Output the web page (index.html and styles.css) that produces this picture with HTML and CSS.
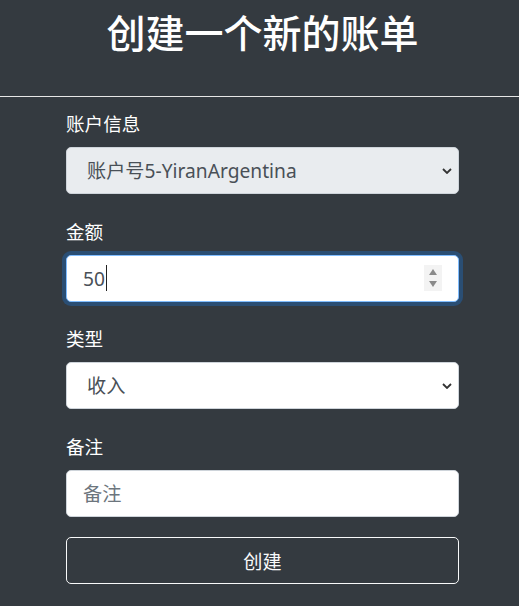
FILE: index.html
```html
<!DOCTYPE html>
<html lang="zh-CN">
<head>
<meta charset="utf-8">
<title>创建一个新的账单</title>
<link rel="stylesheet" href="styles.css">
</head>
<body>
<header class="page-header">
  <h1 class="title">创建一个新的账单</h1>
</header>
<hr class="divider">
<form class="bill-form">
  <div class="form-group">
    <label class="form-label">账户信息</label>
    <select class="form-control select" disabled>
      <option>账户号5-YiranArgentina</option>
    </select>
  </div>
  <div class="form-group">
    <label class="form-label">金额</label>
    <div class="form-control focused">
      <span class="value">50</span><span class="caret"></span>
      <span class="spinner">
        <svg width="18" height="26" viewBox="0 0 18 26"><rect width="18" height="26" fill="#f3f3f3"/><path d="M9 4 L13 10 L5 10 Z" fill="#8a8a8a"/><path d="M9 22 L13 16 L5 16 Z" fill="#8a8a8a"/></svg>
      </span>
    </div>
  </div>
  <div class="form-group">
    <label class="form-label">类型</label>
    <select class="form-control select">
      <option>收入</option>
    </select>
  </div>
  <div class="form-group">
    <label class="form-label">备注</label>
    <input class="form-control" type="text" placeholder="备注">
  </div>
  <button type="button" class="btn-create">创建</button>
</form>
</body>
</html>
```
FILE: styles.css
```css
* { box-sizing: border-box; }
html, body { margin: 0; padding: 0; }
body {
  background: #343a40;
  color: #fff;
  font-family: "Noto Sans", "Noto Sans CJK SC", sans-serif;
  height: 606px;
  overflow: hidden;
}
.page-header { padding: 9px 0 0 6px; text-align: center; }
.title {
  margin: 0;
  font-size: 39px;
  font-weight: 500;
  line-height: 47px;
  letter-spacing: 0;
}
.divider {
  margin: 40px 0 0;
  border: 0;
  border-top: 1px solid #e6e6e6;
  height: 0;
}
.bill-form {
  display: flex;
  flex-direction: column;
  gap: 22.7px;
  margin: 12px 60px 0 66px;
}
.form-group { display: flex; flex-direction: column; }
.form-label {
  font-size: 18.6px;
  line-height: 29px;
  margin-bottom: 9px;
  font-weight: 400;
  color: #fff;
}
.form-control {
  display: flex;
  align-items: center;
  width: 100%;
  height: 47px;
  padding: 0 16px;
  font-family: inherit;
  font-size: 19.2px;
  color: #495057;
  background: #fff;
  border: 1px solid #ced4da;
  border-radius: 5px;
  outline: none;
}
.form-control::placeholder { color: #6c757d; }
.select {
  appearance: none;
  -webkit-appearance: none;
  padding-left: 20px;
  background-image: url("data:image/svg+xml,%3Csvg xmlns='http://www.w3.org/2000/svg' width='10' height='6' viewBox='0 0 10 6'%3E%3Cpath d='M1 1 L5 5 L9 1' fill='none' stroke='%23333' stroke-width='1.8'/%3E%3C/svg%3E");
  background-repeat: no-repeat;
  background-position: right 6px center;
  background-size: 10px 6px;
}
.select:disabled { background-color: #e9ecef; opacity: 1; color: #495057; }
.focused {
  border-color: #80bdff;
  box-shadow: 0 0 0 4px #2a4e74;
  position: relative;
}
.value { color: #495057; }
.caret {
  display: inline-block;
  width: 1px;
  height: 26px;
  background: #222;
  margin-left: 1px;
}
.spinner {
  margin-left: auto;
  margin-right: 0;
  display: flex;
}
.btn-create {
  height: 47px;
  margin-top: -2.7px;
  width: 100%;
  background: transparent;
  color: #f8f9fa;
  border: 1px solid #f8f9fa;
  border-radius: 5px;
  font-family: inherit;
  font-size: 19.2px;
}
```
